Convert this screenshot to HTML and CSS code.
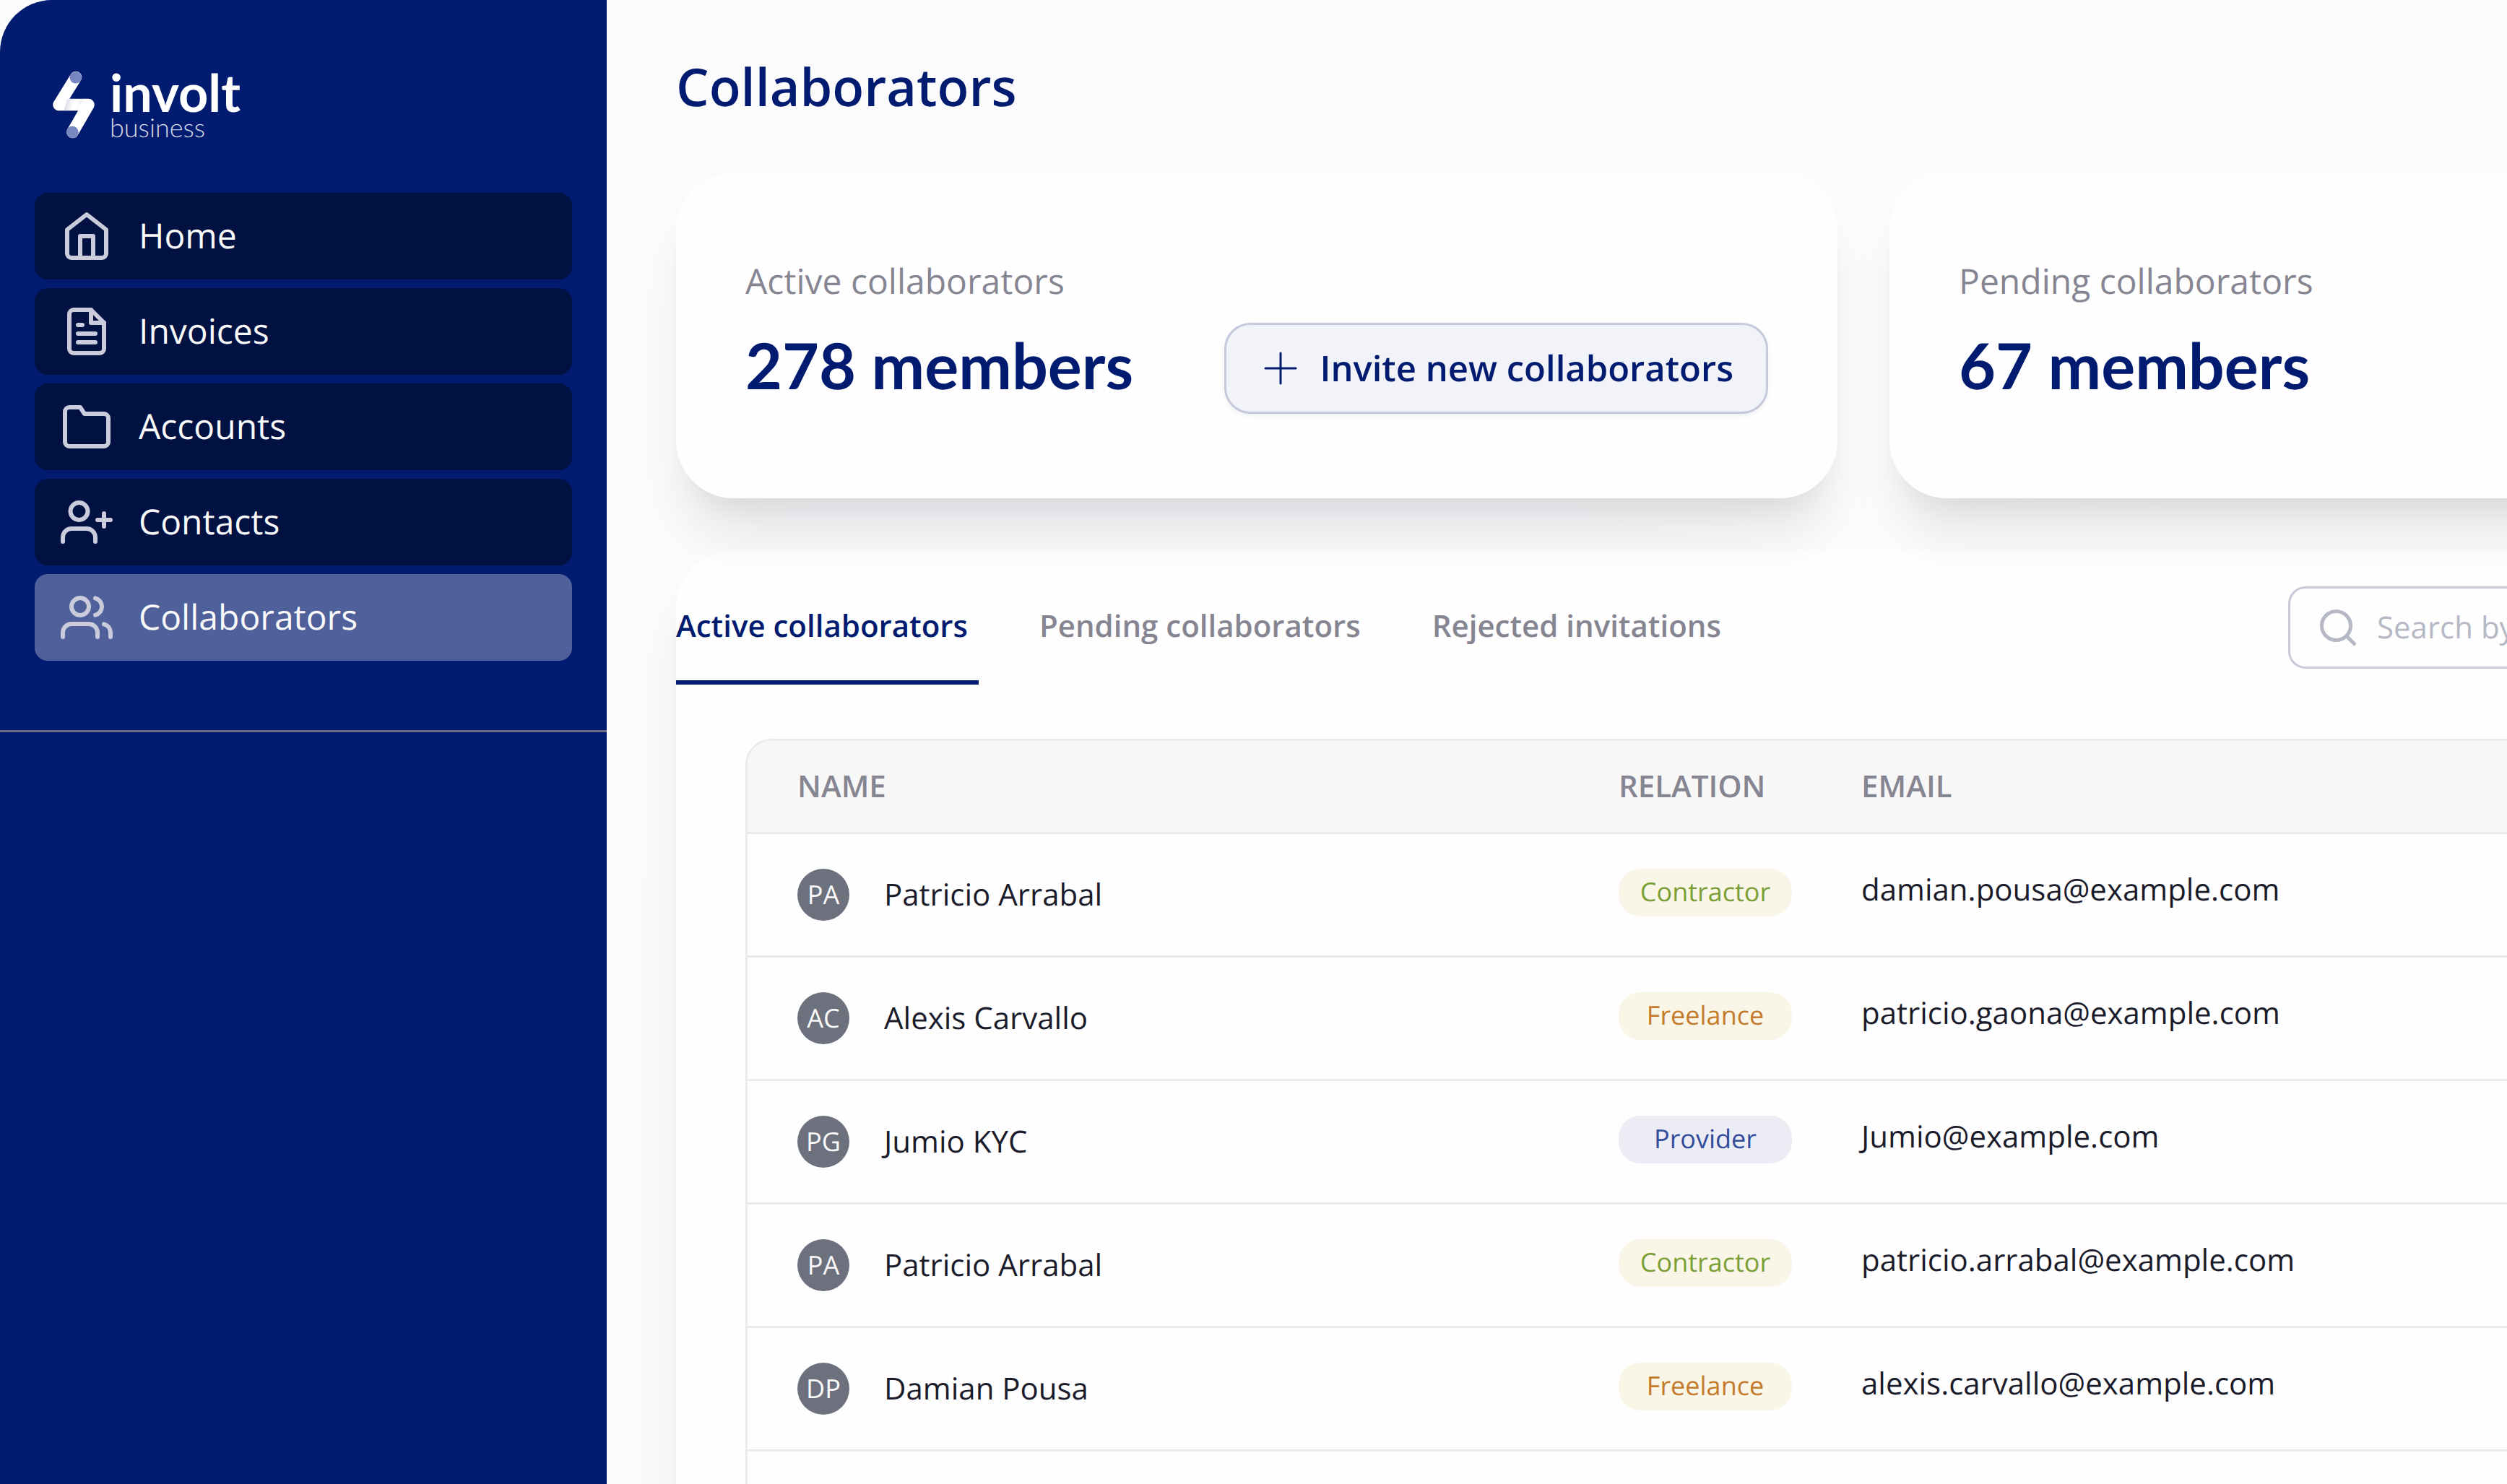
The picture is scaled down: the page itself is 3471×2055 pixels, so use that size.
FILE: index.html
```html
<!DOCTYPE html>
<html lang="en">
<head>
  <meta charset="UTF-8" />
  <title>Collaborators</title>
  <link rel="stylesheet" href="styles.css">
</head>
<body>
  <div class="app">
    <aside class="sidebar">
      <a class="logo" href="#">
        <svg class="logo-mark" viewBox="0 0 60 96" fill="none" aria-hidden="true">
          <defs>
            <linearGradient id="fold" x1="16" y1="46" x2="46" y2="54" gradientUnits="userSpaceOnUse">
              <stop offset="0.1" stop-color="#fff" />
              <stop offset="0.12" stop-color="#dfe0ea" />
              <stop offset="0.45" stop-color="#fff" />
              <stop offset="0.6" stop-color="#fff" />
              <stop offset="0.88" stop-color="#dfe0ea" />
              <stop offset="0.9" stop-color="#fff" />
            </linearGradient>
          </defs>
          <path d="M33 11L9.500 49H50.500L28.500 87" stroke="#fff" stroke-width="16.500" stroke-linecap="round" stroke-linejoin="round" />
          <path d="M22 41H43L34 57H13Z" fill="url(#fold)" />
          <circle cx="32.800" cy="11.300" r="8.300" fill="#7688bf" />
          <circle cx="28.300" cy="87" r="8.300" fill="#7688bf" />
        </svg>
        <span class="logo-text">
          <span class="logo-name">involt</span>
          <span class="logo-sub">business</span>
        </span>
      </a>

      <nav class="nav">
        <a class="nav-item" href="#">
          <svg class="icon" viewBox="0 0 24 24"><path d="M3 9l9-7 9 7v11a2 2 0 0 1-2 2H5a2 2 0 0 1-2-2z" /><path d="M9 22V12h6v10" /></svg>
          Home
        </a>
        <a class="nav-item" href="#">
          <svg class="icon" viewBox="0 0 24 24"><path d="M14 2H6a2 2 0 0 0-2 2v16a2 2 0 0 0 2 2h12a2 2 0 0 0 2-2V8z" /><path d="M14 2v6h6M16 13H8M16 17H8M10 9H8" /></svg>
          Invoices
        </a>
        <a class="nav-item" href="#">
          <svg class="icon" viewBox="0 0 24 24"><path d="M22 19a2 2 0 0 1-2 2H4a2 2 0 0 1-2-2V5a2 2 0 0 1 2-2h5l2 3h9a2 2 0 0 1 2 2z" /></svg>
          Accounts
        </a>
        <a class="nav-item" href="#">
          <svg class="icon" viewBox="0 0 24 24"><path d="M16 21v-2a4 4 0 0 0-4-4H5a4 4 0 0 0-4 4v2" /><circle cx="8.500" cy="7" r="4" /><path d="M20 8v6M23 11h-6" /></svg>
          Contacts
        </a>
        <a class="nav-item active" href="#" aria-current="page">
          <svg class="icon" viewBox="0 0 24 24"><path d="M17 21v-2a4 4 0 0 0-4-4H5a4 4 0 0 0-4 4v2" /><circle cx="9" cy="7" r="4" /><path d="M23 21v-2a4 4 0 0 0-3-3.870M16 3.130a4 4 0 0 1 0 7.750" /></svg>
          Collaborators
        </a>
      </nav>
    </aside>

    <main class="main">
      <h1>Collaborators</h1>

      <div class="cards">
        <section class="card">
          <p class="card-label">Active collaborators</p>
          <div class="card-row">
            <p class="card-value">278 members</p>
            <button type="button" class="invite">
              <svg class="icon-plus" viewBox="0 0 24 24"><path d="M12 5v14M5 12h14" /></svg>
              Invite new collaborators
            </button>
          </div>
        </section>
        <section class="card">
          <p class="card-label">Pending collaborators</p>
          <div class="card-row">
            <p class="card-value">67 members</p>
          </div>
        </section>
      </div>

      <section class="panel">
        <div class="toolbar">
          <div class="tabs">
            <button type="button" class="tab active">Active collaborators</button>
            <button type="button" class="tab">Pending collaborators</button>
            <button type="button" class="tab">Rejected invitations</button>
          </div>
          <label class="search">
            <svg class="icon-search" viewBox="0 0 24 24"><circle cx="11" cy="11" r="8" /><path d="M21 21l-4.350-4.350" /></svg>
            <input type="search" placeholder="Search by" aria-label="Search" />
          </label>
        </div>

        <div class="table-wrap">
          <table>
            <colgroup>
              <col class="col-name" />
              <col class="col-relation" />
              <col />
            </colgroup>
            <thead>
              <tr>
                <th>NAME</th>
                <th>RELATION</th>
                <th>EMAIL</th>
              </tr>
            </thead>
            <tbody>
              <tr>
                <td><div class="person"><span class="avatar">PA</span>Patricio Arrabal</div></td>
                <td><span class="badge contractor">Contractor</span></td>
                <td>damian.pousa@example.com</td>
              </tr>
              <tr>
                <td><div class="person"><span class="avatar">AC</span>Alexis Carvallo</div></td>
                <td><span class="badge freelance">Freelance</span></td>
                <td>patricio.gaona@example.com</td>
              </tr>
              <tr>
                <td><div class="person"><span class="avatar">PG</span>Jumio KYC</div></td>
                <td><span class="badge provider">Provider</span></td>
                <td>Jumio@example.com</td>
              </tr>
              <tr>
                <td><div class="person"><span class="avatar">PA</span>Patricio Arrabal</div></td>
                <td><span class="badge contractor">Contractor</span></td>
                <td>patricio.arrabal@example.com</td>
              </tr>
              <tr>
                <td><div class="person"><span class="avatar">DP</span>Damian Pousa</div></td>
                <td><span class="badge freelance">Freelance</span></td>
                <td>alexis.carvallo@example.com</td>
              </tr>
              <tr>
                <td></td>
                <td></td>
                <td></td>
              </tr>
            </tbody>
          </table>
        </div>
      </section>
    </main>
  </div>
</body>
</html>
```

FILE: styles.css
```css
* {
  box-sizing: border-box;
}

body {
  margin: 0;
  height: 100vh;
  overflow: hidden;
  background: #fafcfd;
  font-family: "Open Sans", sans-serif;
  font-size: 42px;
  line-height: 58px;
  text-rendering: geometricPrecision;
  color: #1b1c2b;
}

h1,
p {
  margin: 0;
}

a {
  color: inherit;
  text-decoration: none;
}

button,
input {
  font: inherit;
  color: inherit;
  text-rendering: inherit;
}

.app {
  display: flex;
  min-width: 4320px;
  min-height: 100vh;
}

/* Sidebar */
.sidebar {
  width: 840px;
  flex-shrink: 0;
  background: #001b6f;
  border-top-left-radius: 72px;
}

.logo {
  display: flex;
  gap: 20px;
  padding: 96px 72px 75px;
}

.logo-mark {
  width: 60px;
  height: 96px;
}

.logo-text {
  display: flex;
  flex-direction: column;
  font-family: Lato, sans-serif;
  color: #fff;
}

.logo-name {
  font-size: 72px;
  line-height: 64px;
  font-weight: 700;
}

.logo-sub {
  font-size: 36px;
  line-height: 32px;
  font-weight: 300;
  color: #d5d8e6;
}

.nav {
  display: flex;
  flex-direction: column;
  gap: 12px;
  padding: 0 48px 96px;
  border-bottom: 3px solid #6d6e84;
}

.nav-item {
  display: flex;
  align-items: center;
  gap: 36px;
  height: 120px;
  padding: 0 36px;
  border-radius: 18px;
  background: #001142;
  font-size: 48px;
  color: #f9f9f9;
}

.nav-item.active {
  background: #4f609b;
}

.icon,
.icon-plus,
.icon-search {
  flex-shrink: 0;
  width: 72px;
  height: 72px;
  fill: none;
  stroke: #cacbdb;
  stroke-width: 2;
  stroke-linecap: round;
  stroke-linejoin: round;
}

/* Content */
.main {
  flex: 1;
  padding: 72px 96px 0;
  background: linear-gradient(100deg, #fcfcfc, #fbfafc 15%, #fbfafc 35%, #fcfcfc 45%, #fdfcfb 70%);
}

h1 {
  font-size: 72px;
  line-height: 96px;
  font-weight: 600;
  color: #001b6f;
}

.cards {
  display: grid;
  grid-template-columns: 1fr 1fr;
  gap: 72px;
  margin: 72px 0;
}

.card,
.panel {
  background: #fefefe;
  border-radius: 80px;
  box-shadow: 0 60px 75px -15px rgba(0, 8, 32, 0.1), 0 30px 30px -15px rgba(0, 0, 0, 0.04);
}

.card {
  padding: 114px 96px 117px;
}

.card-label {
  margin-bottom: 21px;
  font-size: 48px;
  line-height: 72px;
  color: #868592;
}

.card-row {
  display: flex;
  justify-content: space-between;
  min-height: 126px;
}

.card-value {
  font-family: Lato, sans-serif;
  font-size: 88px;
  line-height: 116px;
  font-weight: 700;
  color: #001b6f;
}

.invite {
  display: flex;
  align-items: center;
  gap: 18px;
  height: 126px;
  padding: 0 45px 0 39px;
  border: 3px solid #c5c9db;
  border-radius: 36px;
  background: #f2f3f8;
  box-shadow: 0 3px 6px rgba(0, 0, 0, 0.05);
  font-size: 49px;
  font-weight: 600;
  color: #001b6f;
}

.icon-plus {
  stroke: #001b6f;
  stroke-width: 1;
}

.toolbar {
  display: flex;
  justify-content: space-between;
  padding: 50px 96px 75px 0;
}

.tabs {
  display: flex;
  gap: 84px;
}

.tab {
  height: 136px;
  padding: 0 15px 20px 0;
  border: 0;
  border-bottom: 6px solid transparent;
  background: none;
  font-weight: 600;
  color: #868592;
}

.tab.active {
  border-color: #001b6f;
  color: #001b6f;
}

.search {
  display: flex;
  align-items: center;
  gap: 24px;
  width: 960px;
  height: 114px;
  padding: 0 36px;
  border: 3px solid #c9cad9;
  border-radius: 24px;
  background: #fefefe;
}

.search input {
  flex: 1;
  padding: 0;
  border: 0;
  outline: none;
  background: none;
}

.search input::placeholder {
  color: #b6b8c6;
}

.icon-search {
  width: 60px;
  height: 60px;
  stroke: #b6b8c6;
}

/* Table */
.table-wrap {
  margin: 0 96px;
  border: 3px solid #ebebeb;
  border-radius: 36px;
  overflow: hidden;
}

table {
  width: 100%;
  table-layout: fixed;
  border-spacing: 0;
}

.col-name {
  width: 1158px;
}

.col-relation {
  width: 336px;
}

th {
  height: 129px;
  padding: 0 48px;
  border-bottom: 3px solid #ebebeb;
  background: #f7f7f7;
  text-align: left;
  font-weight: 600;
  color: #868592;
}

td {
  height: 171px;
  padding: 48px 48px 0;
  border-bottom: 3px solid #ebebeb;
  vertical-align: top;
}

th:first-child,
td:first-child {
  padding-left: 69px;
}

.person {
  display: flex;
  align-items: center;
  gap: 48px;
}

.avatar {
  width: 72px;
  height: 72px;
  border-radius: 50%;
  background: #6d707d;
  font-size: 36px;
  line-height: 72px;
  text-align: center;
  color: #fafafa;
}

.badge {
  display: block;
  height: 66px;
  border-radius: 30px;
  font-size: 36px;
  line-height: 64px;
  text-align: center;
}

.contractor {
  background: #f9f6e8;
  color: #7b9f35;
}

.freelance {
  background: #f9f6e8;
  color: #c47b2b;
}

.provider {
  background: #ecedf4;
  color: #324c9b;
}
```
